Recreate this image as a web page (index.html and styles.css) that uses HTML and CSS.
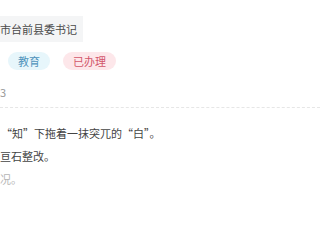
FILE: index.html
```html
<!DOCTYPE html>
<html lang="zh-CN">
<head>
    <meta charset="UTF-8">
    <meta name="viewport" content="width=device-width, initial-scale=1.0">
    <title>办理详情</title>
    <link rel="stylesheet" href="styles.css">
</head>
<body>
    <div class="detail">
        <div class="head">
            <span class="unit">市台前县委书记</span>
            <div class="tags">
                <span class="tag tag-type">教育</span>
                <span class="tag tag-state">已办理</span>
            </div>
            <div class="date">3</div>
        </div>
        <div class="body">
            <p class="line first">“知”下拖着一抹突兀的“白”。</p>
            <p class="line">亘石整改。</p>
            <p class="line muted">况。</p>
        </div>
    </div>
</body>
</html>
```

FILE: styles.css
```css
body {
    margin: 0;
    background: #fff;
    font-family: "Noto Sans CJK SC", "Noto Sans", sans-serif;
    color: #333;
}
.detail {
    width: 320px;
    overflow: hidden;
}
.head {
    padding-top: 16px;
    padding-bottom: 8px;
    border-bottom: 1px dashed #e6e6e6;
}
.unit {
    display: inline-block;
    height: 26px;
    line-height: 26px;
    padding-right: 6px;
    font-size: 11px;
    background: #f4f5f6;
    color: #4a4a4a;
    vertical-align: top;
}
.tags {
    display: flex;
    gap: 13px;
    margin-top: 10px;
    padding-left: 8px;
}
.tag {
    height: 18px;
    line-height: 18px;
    padding: 0 10px;
    border-radius: 9px;
    font-size: 11px;
}
.tag-type {
    background: #e7f6fb;
    color: #4f93bb;
}
.tag-state {
    background: #fde7ea;
    color: #d2566a;
}
.date {
    margin-top: 15px;
    font-size: 11px;
    line-height: 14px;
    color: #999;
}
.body {
    padding-top: 14px;
}
.line {
    margin: 0;
    font-size: 11px;
    line-height: 23px;
    color: #444;
}
.first {
    padding-left: 1px;
}
.muted {
    color: #b5b5b5;
}
```
